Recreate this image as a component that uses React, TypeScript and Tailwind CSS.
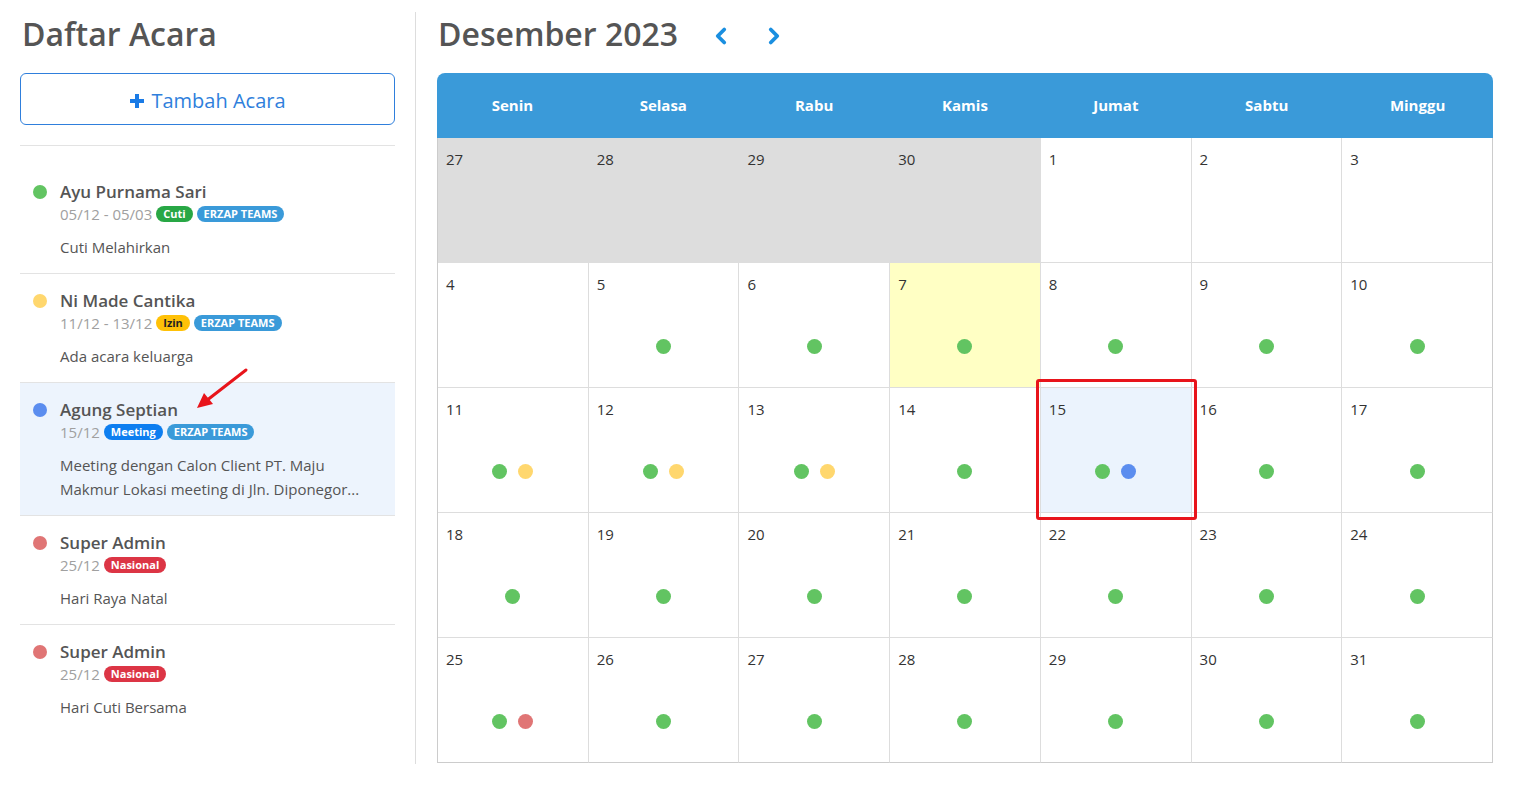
import { ChevronLeft, ChevronRight } from 'lucide-react';

type Badge = { label: string; cls: string };
type EventItem = {
  name: string;
  date: string;
  dot: string;
  badges: Badge[];
  desc: string[];
  active?: boolean;
};

const TEAM: Badge = { label: 'ERZAP TEAMS', cls: 'bg-[#3a9ad9] text-white' };

const events: EventItem[] = [
  {
    name: 'Ayu Purnama Sari',
    date: '05/12 - 05/03',
    dot: 'bg-[#62c462]',
    badges: [{ label: 'Cuti', cls: 'bg-[#28a745] text-white' }, TEAM],
    desc: ['Cuti Melahirkan'],
  },
  {
    name: 'Ni Made Cantika',
    date: '11/12 - 13/12',
    dot: 'bg-[#ffd76e]',
    badges: [{ label: 'Izin', cls: 'bg-[#ffc107] text-[#222]' }, TEAM],
    desc: ['Ada acara keluarga'],
  },
  {
    name: 'Agung Septian',
    date: '15/12',
    dot: 'bg-[#5b8def]',
    badges: [{ label: 'Meeting', cls: 'bg-[#0d7ef0] text-white' }, TEAM],
    desc: ['Meeting dengan Calon Client PT. Maju', 'Makmur Lokasi meeting di Jln. Diponegor...'],
    active: true,
  },
  {
    name: 'Super Admin',
    date: '25/12',
    dot: 'bg-[#e07575]',
    badges: [{ label: 'Nasional', cls: 'bg-[#dc3545] text-white' }],
    desc: ['Hari Raya Natal'],
  },
  {
    name: 'Super Admin',
    date: '25/12',
    dot: 'bg-[#e07575]',
    badges: [{ label: 'Nasional', cls: 'bg-[#dc3545] text-white' }],
    desc: ['Hari Cuti Bersama'],
  },
];

const days = ['Senin', 'Selasa', 'Rabu', 'Kamis', 'Jumat', 'Sabtu', 'Minggu'];

const G = 'bg-[#62c462]';
const Y = 'bg-[#ffd76e]';
const B = 'bg-[#5b8def]';
const R = 'bg-[#e07575]';

type Cell = { n: number; dots: string[]; kind?: 'prev' | 'today' | 'sel' };

const cells: Cell[] = [
  { n: 27, dots: [], kind: 'prev' },
  { n: 28, dots: [], kind: 'prev' },
  { n: 29, dots: [], kind: 'prev' },
  { n: 30, dots: [], kind: 'prev' },
  { n: 1, dots: [] },
  { n: 2, dots: [] },
  { n: 3, dots: [] },
  { n: 4, dots: [] },
  { n: 5, dots: [G] },
  { n: 6, dots: [G] },
  { n: 7, dots: [G], kind: 'today' },
  { n: 8, dots: [G] },
  { n: 9, dots: [G] },
  { n: 10, dots: [G] },
  { n: 11, dots: [G, Y] },
  { n: 12, dots: [G, Y] },
  { n: 13, dots: [G, Y] },
  { n: 14, dots: [G] },
  { n: 15, dots: [G, B], kind: 'sel' },
  { n: 16, dots: [G] },
  { n: 17, dots: [G] },
  ...[18, 19, 20, 21, 22, 23, 24].map(n => ({ n, dots: [G] })),
  { n: 25, dots: [G, R] },
  ...[26, 27, 28, 29, 30, 31].map(n => ({ n, dots: [G] })),
];

function cellBg(kind?: Cell['kind']) {
  if (kind === 'prev') return 'bg-[#dddddd] border-[#dddddd]';
  if (kind === 'today') return 'bg-[#ffffc4] border-[#dddddd]';
  if (kind === 'sel') return 'bg-[#ebf3fd] border-[#dddddd]';
  return 'bg-white border-[#dddddd]';
}

function EventRow({ ev, first }: { ev: EventItem; first?: boolean }) {
  return (
    <div
      className={`flex gap-[13px] pl-[13px] pr-3 border-b border-[#e3e3e3] last:border-b-0 ${
        first ? 'pt-[34px]' : 'pt-[15px]'
      } pb-[14px] ${ev.active ? 'bg-[#edf4fd]' : ''}`}
    >
      <div className={`mt-[5px] w-[14px] h-[14px] rounded-full shrink-0 ${ev.dot}`} />
      <div className="flex flex-col min-w-0">
        <div className="text-[17px] leading-[24px] font-semibold text-[#555]">{ev.name}</div>
        <div className="flex items-center gap-[4px] text-[15px] leading-[20px] text-[#a0a0a0]">
          <span>{ev.date}</span>
          {ev.badges.map(b => (
            <span
              key={b.label}
              className={`text-[11px] leading-[16px] font-bold px-[7px] rounded-[8px] ${b.cls}`}
            >
              {b.label}
            </span>
          ))}
        </div>
        <div className="mt-[11px] text-[15px] leading-[24px] text-[#555]">
          {ev.desc.map(d => (
            <div key={d}>{d}</div>
          ))}
        </div>
      </div>
    </div>
  );
}

export default function App() {
  return (
    <div
      className="relative w-[1516px] h-[786px] bg-white flex overflow-hidden"
      style={{ fontFamily: '"Open Sans", "Noto Sans", sans-serif' }}
    >
      {/* Left: list of events */}
      <div className="ml-[20px] w-[375px] shrink-0 flex flex-col">
        <h1 className="mt-[12px] ml-[2px] text-[32px] leading-[44px] font-semibold text-[#555]">Daftar Acara</h1>
        <button className="mt-[17px] h-[52px] w-full rounded-[6px] border border-[#2f7fdc] flex items-center justify-center gap-[6px] pt-[3px] text-[20px] text-[#2f7fdc]">
          <svg width="16" height="16" viewBox="0 0 16 16" className="text-[#1a7be6]">
            <path d="M8 1v14M1 8h14" stroke="currentColor" strokeWidth="4" />
          </svg>
          <span>Tambah Acara</span>
        </button>
        <div className="mt-[20px] border-t border-[#e3e3e3]" />
        <div className="flex flex-col">
          {events.map((ev, i) => (
            <EventRow key={i} ev={ev} first={i === 0} />
          ))}
        </div>
      </div>

      {/* Divider */}
      <div className="ml-[20px] mt-[12px] w-px h-[752px] bg-[#dddddd] shrink-0" />

      {/* Right: calendar */}
      <div className="ml-[21px] w-[1056px] shrink-0 flex flex-col">
        <div className="mt-[12px] flex items-center h-[44px]">
          <h2 className="ml-[1px] text-[32px] leading-[44px] font-semibold text-[#555]">Desember 2023</h2>
          <ChevronLeft className="ml-[30px] mt-[4px] text-[#1a8fe0]" size={26} strokeWidth={3.5} />
          <ChevronRight className="ml-[27px] mt-[4px] text-[#1a8fe0]" size={26} strokeWidth={3.5} />
        </div>
        <div className="mt-[17px] grid grid-cols-7 h-[65px] bg-[#3a9ad9] rounded-t-[8px]">
          {days.map(d => (
            <div key={d} className="flex items-center justify-center text-[15px] font-bold text-white">
              {d}
            </div>
          ))}
        </div>
        <div className="grid grid-cols-7 border-l border-[#cccccc]">
          {cells.map((c, i) => (
            <div
              key={i}
              className={`h-[125px] border-r border-b flex flex-col px-[8px] pt-[10px] ${cellBg(c.kind)} ${
                i % 7 === 6 ? 'border-r-[#cccccc]' : ''
              } ${i >= 28 ? 'border-b-[#cccccc]' : ''}`}
            >
              <div className="text-[15px] leading-[22px] text-[#333]">{c.n}</div>
              {c.dots.length > 0 && (
                <div className="mt-[44px] flex justify-center gap-[11px]">
                  {c.dots.map((d, j) => (
                    <span key={j} className={`w-[15px] h-[15px] rounded-full ${d}`} />
                  ))}
                </div>
              )}
            </div>
          ))}
        </div>
      </div>

      {/* Annotations */}
      <div className="absolute left-[1036px] top-[379px] w-[161px] h-[141px] border-[3px] border-[#e8141b] rounded-[3px] pointer-events-none" />
      <svg className="absolute left-[190px] top-[364px] pointer-events-none" width="64" height="50" viewBox="0 0 64 50">
        <line x1="56" y1="6" x2="16" y2="37" stroke="#e8141b" strokeWidth="3" strokeLinecap="round" />
        <polygon points="7,44 14,29 23,40" fill="#e8141b" />
      </svg>
    </div>
  );
}
